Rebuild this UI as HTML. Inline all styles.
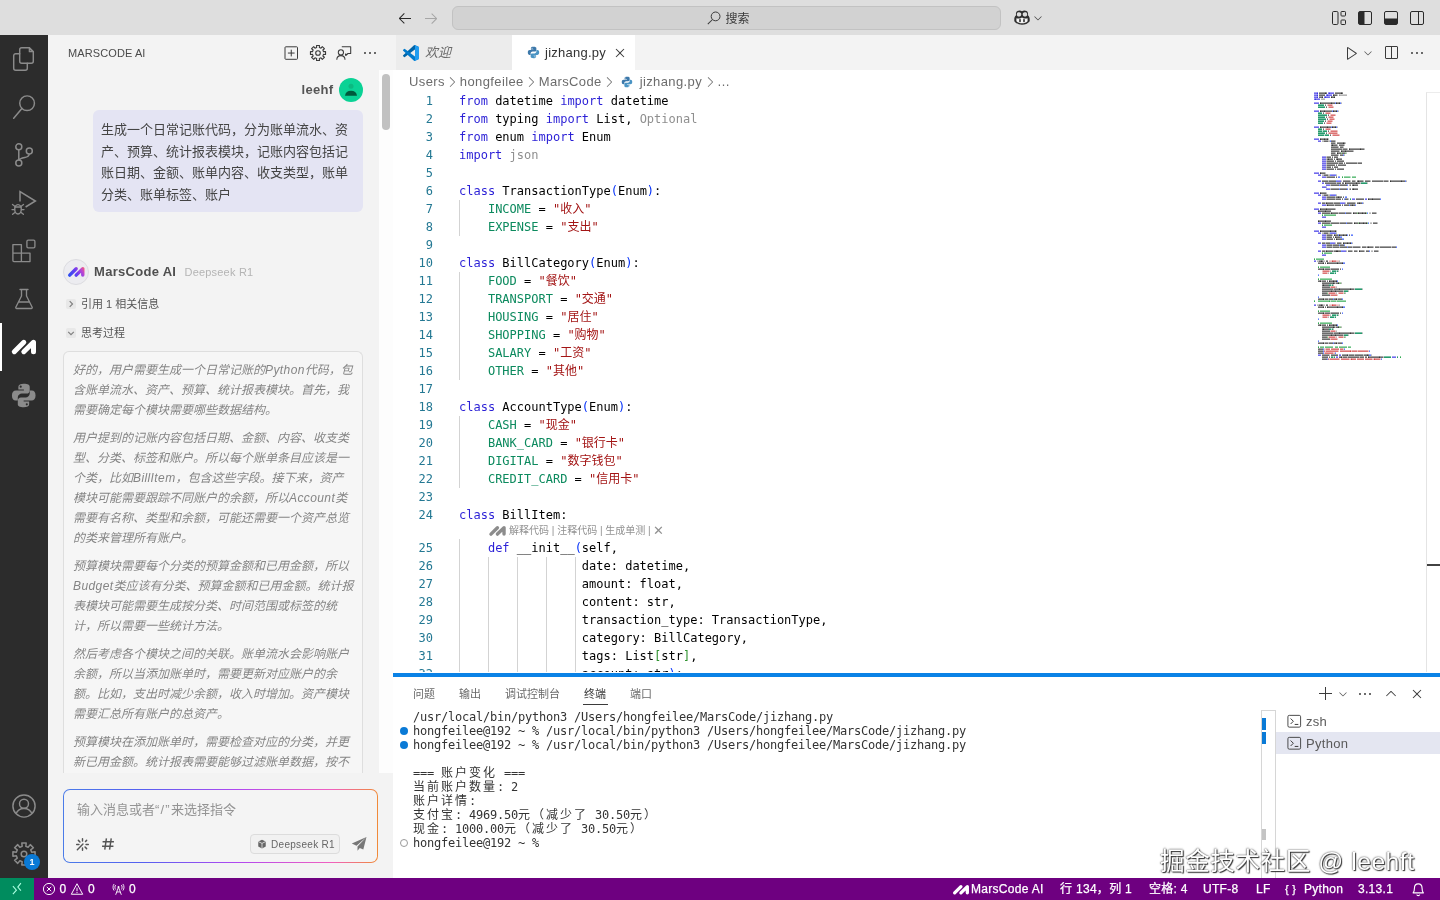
<!DOCTYPE html>
<html lang="zh-CN"><head><meta charset="utf-8"><title>jizhang.py — MarsCode</title>
<style>

*{box-sizing:border-box;margin:0;padding:0}
html,body{width:1440px;height:900px;overflow:hidden;background:#fff}
body{font-family:"Liberation Sans","Noto Sans CJK SC",sans-serif;font-size:13px;color:#3b3b3b;-webkit-font-smoothing:antialiased}
svg{display:block;overflow:visible}
#app{position:relative;width:1440px;height:900px;overflow:hidden;background:#fff;will-change:transform}

/* ---------- title bar ---------- */
#titlebar{position:absolute;left:0;top:0;width:1440px;height:35px;background:#dedede}
#titlebar .nav{position:absolute;top:10px;width:16px;height:16px;color:#2a2a2a}
#titlebar .nav.back{left:397px}
#titlebar .nav.fwd{left:423px;color:#a6a6a6}
#cmdcenter{position:absolute;left:452px;top:6px;width:549px;height:24px;border:1px solid #c2c2c2;border-radius:6px;background:#d2d2d2}
#cmdcenter .sicon{position:absolute;left:252.500px;top:3px;width:16px;height:16px;color:#3b3b3b}
#cmdcenter .stext{position:absolute;left:272.500px;top:.5px;line-height:22px;font-size:12px;color:#3b3b3b}
#copilot{position:absolute;left:1013px;top:9px;width:18px;height:18px;color:#2d2d2d}
#copilot-chev{position:absolute;left:1032px;top:12px;width:12px;height:12px;color:#444}
#titlebar .lay{position:absolute;top:10px;width:16px;height:16px;color:#2a2a2a}
.lay.l1{left:1331px}.lay.l2{left:1357px}.lay.l3{left:1383px}.lay.l4{left:1409px}

/* ---------- activity bar ---------- */
#activity{position:absolute;left:0;top:35px;width:48px;height:843px;background:#2c2c2c}
#activity .act{position:absolute;left:0;width:48px;height:48px;color:#8b8b8b}
#activity .act svg{position:absolute;left:12px;top:12px;width:24px;height:24px}
#activity .act.active{color:#fff}
#activity .act.big svg{left:10px;top:10.500px;width:27.500px;height:27px}
#activity .actbar{position:absolute;left:0;top:288px;width:2px;height:48px;background:#fff}
#activity .badge{position:absolute;left:24px;top:819px;width:16px;height:16px;border-radius:8px;background:#0a7ad6;color:#fff;font-size:9px;font-weight:bold;line-height:16px;text-align:center}

/* ---------- sidebar ---------- */
#sidebar{position:absolute;left:48px;top:35px;width:345px;height:843px;background:#f3f3f3;overflow:hidden}
#sidebar .hdr{position:absolute;left:20px;top:0;height:35px;line-height:37px;font-size:11px;color:#4a4a4a;letter-spacing:.1px}
#sidebar .hact{position:absolute;top:10px;width:16px;height:16px;color:#3b3b3b}
#sidestrip{position:absolute;left:331px;top:35px;width:14px;height:703px;background:#fdfdfd}
#sidethumb{position:absolute;left:334px;top:38.500px;width:8px;height:56px;border-radius:4px;background:#c1c1c1}

.uname{position:absolute;left:253.500px;top:45.500px;font-size:13px;font-weight:bold;color:#555;line-height:18px;letter-spacing:.3px}
.uavatar{position:absolute;left:291px;top:43px;width:24px;height:24px;border-radius:12px;background:#0ad295;overflow:hidden}
.ububble{position:absolute;left:45px;top:75px;width:270px;height:102px;border-radius:6px;background:#e4e4f3;padding:9px 8px 0;font-size:13px;line-height:21.67px;color:#444;white-space:nowrap}
.ailogo{position:absolute;left:15px;top:224px;width:26px;height:26px;border-radius:13px;background:#ececf0;border:1px solid #dcdce0}
.ainame{position:absolute;left:46px;top:228px;font-size:13px;font-weight:bold;color:#4f4f4f;line-height:18px;letter-spacing:.3px}
.aimodel{position:absolute;left:136.500px;top:228px;font-size:11px;color:#b4b4b4;line-height:18px;letter-spacing:.2px}
.fold{position:absolute;left:17px;height:14px;font-size:11px;line-height:14px;color:#555;white-space:nowrap}
.fold .chv{position:absolute;left:1px;top:2px;width:10px;height:10px;border-radius:2px;background:#e8e8e8;color:#808080}
.fold .lbl{position:absolute;left:16px;top:0}
.think{position:absolute;left:15px;top:316px;width:300px;height:441px;border:1px solid #dedede;border-bottom:none;border-radius:6px 6px 0 0;background:#f6f6f6;padding:8px 9px;font-size:12px;line-height:20px;color:#858585;font-style:italic;white-space:nowrap;overflow:hidden}
.think p{margin:0 0 8px 0}
.think .la{letter-spacing:.4px}
.fade{position:absolute;left:0;top:738px;width:345px;height:20px;background:#f3f3f3}
.inputbox{position:absolute;left:15px;top:754px;width:315px;height:74px;border-radius:7px;background:linear-gradient(90deg,#4a7be8 0%,#5560f0 25%,#b048f0 55%,#f060c0 85%,#f08a38 100%);}
.inputbox .inner{position:absolute;left:1.200px;top:1.200px;right:1.200px;bottom:1.200px;border-radius:5.800px;background:#f4f4f4}
.inputbox .ph{position:absolute;left:14px;top:12px;font-size:13px;line-height:18px;color:#949494;white-space:nowrap}
.inputbox .ic{position:absolute;color:#555}
.modelchip{position:absolute;left:187px;top:45px;width:90px;height:20px;border:1px solid #dcdcdc;border-radius:4px;background:#f1f1f1;font-size:10px;line-height:20px;color:#666;white-space:nowrap}
.modelchip svg{position:absolute;left:6px;top:4px;width:10px;height:10px}
.modelchip span{position:absolute;left:20px;top:0;letter-spacing:.3px}

/* ---------- editor ---------- */
#editor{position:absolute;left:393px;top:35px;width:1047px;height:637px;background:#fff;overflow:hidden}
#tabs{position:absolute;left:0;top:0;width:1047px;height:35px;background:#f3f3f3}
.tab{position:absolute;top:0;height:35px;font-size:13px;line-height:35px;white-space:nowrap}
.tab.t1{left:3px;width:116px;background:#ececec;color:#6a6a6a}
.tab.t2{left:119px;width:123px;background:#fff;color:#333}
.tab .ticon{position:absolute;left:7px;top:10px;width:16px;height:16px}
.tab .ticon.py{left:14.500px;top:11px;width:13px;height:13px}
.tab .tlabel{position:absolute;left:29px;top:0}
.tab.t2 .tlabel{left:33px;letter-spacing:.25px}
.tab .tlabel.it{font-style:italic}
.tab .tclose{position:absolute;left:100px;top:10px;width:16px;height:16px;color:#3b3b3b}
.tact{position:absolute;top:10px;width:16px;height:16px;color:#3b3b3b}
.tact.a1{left:951px}.tact.a1c{left:969px;top:12px;width:12px;height:12px;color:#555}.tact.a2{left:990px}.tact.a3{left:1016px}
#crumbs{position:absolute;left:0;top:35px;width:1047px;height:22px;background:#fff;font-size:13px;line-height:24px;letter-spacing:.38px;color:#6c6c6c;white-space:nowrap;padding-left:16px}
#crumbs span{display:inline-block;vertical-align:top}
#crumbs .sep{width:15px;height:22px;color:#777}
#crumbs .sep svg{width:16px;height:16px;margin:4px 0 0 -.5px}
#crumbs .cpy{width:13px;height:22px;margin:0 5.500px 0 4.500px}
#crumbs .cpy svg{width:12px;height:12px;margin-top:6px}
#code{position:absolute;left:0;top:57px;width:1047px;height:580px;font-family:"DejaVu Sans Mono","Noto Sans CJK SC",monospace;font-size:12px;line-height:18px;color:#000}
.ln .tx{white-space:pre}
.ln{position:relative;height:18px}
.ln .no{position:absolute;left:0;top:0;width:40px;text-align:right;color:#237893}
.ln .tx{position:absolute;left:66px;top:0}
.ln .g{position:absolute;top:0;width:1px;height:18px;background:#d3d3d3}
.lens{position:relative;height:15px;font-family:"Liberation Sans","Noto Sans CJK SC",sans-serif;font-size:10px;line-height:15px;color:#919191}
.lens .lt{position:absolute;left:116px;top:-1px;white-space:nowrap}
.lens svg{position:absolute;left:96px;top:1.500px;width:17px;height:9.800px}
.k{color:#2a1fd6}.c{color:#0c8a5e}.s{color:#a31515}.s .z{color:#a31515}.b1{color:#0431fa}.b2{color:#319331}.u{color:#8f8f8f}
#minimap{position:absolute;left:921px;top:57px;width:106px;height:580px}
#ruler{position:absolute;left:1033px;top:57px;width:14px;height:580px;border-left:1px solid #e4e4e4;border-top:1px solid #ececec}
#rulermark{position:absolute;left:1034px;top:528.500px;width:13px;height:2.500px;background:#424242}
#sash{z-index:5;position:absolute;left:393px;top:673px;width:1047px;height:4px;background:#0a82e6}

/* ---------- panel ---------- */
#panel{position:absolute;left:393px;top:676px;width:1047px;height:202px;background:#fff;overflow:hidden}
#panel .ptab{position:absolute;top:9px;font-size:11px;line-height:18px;color:#6a6a6a;white-space:nowrap}
#panel .ptab.on{color:#3b3b3b}
#panel .punder{position:absolute;left:190px;top:28px;width:25px;height:1px;background:#3b3b3b}
#panel .pact{position:absolute;top:10px;width:16px;height:16px;color:#3b3b3b}
#term{position:absolute;left:20px;top:34px;font-family:"DejaVu Sans Mono","Noto Sans CJK SC",monospace;font-size:12px;line-height:14px;color:#333;white-space:pre;letter-spacing:-0.224px}
#term .z{letter-spacing:2px}
#term .zp{letter-spacing:2px}
.tdot{position:absolute;left:7px;width:8px;height:8px;border-radius:4px;background:#0a7ad6}
.tdot.o{background:#fff;border:1px solid #9a9a9a}
#tscroll{position:absolute;left:868px;top:34px;width:15px;height:168px;border-left:1px solid #d6d6d6;border-right:1px solid #d6d6d6;border-top:1px solid #d6d6d6}
.tsm{position:absolute;left:869px;width:4px;background:#0a7ad6}
#tlist .row{position:absolute;left:883px;width:164px;height:22px;font-size:13px;line-height:24px;color:#5a5a5a;letter-spacing:.3px}
#tlist .row.sel{background:#e4e6f1}
#tlist .row svg{position:absolute;left:11px;top:4px;width:14.500px;height:14.500px;color:#3b3b3b}
#tlist .row span{position:absolute;left:30px;top:0}

/* ---------- status bar ---------- */
#status{position:absolute;left:0;top:878px;width:1440px;height:22px;background:#6e0080;color:#fff;font-size:12px;line-height:22px;white-space:nowrap;letter-spacing:.3px;-webkit-text-stroke:.25px #fff}
#status .remote{position:absolute;left:0;top:0;width:34px;height:22px;background:#008c5e}
#status .remote svg{position:absolute;left:9px;top:3px;width:16px;height:16px}
#status .si{position:absolute;top:0}
#status .sv{position:absolute;top:4px;width:14px;height:14px}
#watermark{position:absolute;left:1160px;top:844px;font-size:24.600px;line-height:36px;color:#fff;white-space:nowrap;letter-spacing:.55px;text-shadow:1px 1px 1px rgba(40,40,40,.95),0 0 2px rgba(50,50,50,.85),-.5px -.5px 1px rgba(90,90,90,.45)}

</style></head>
<body>
<div id="app">
<!-- ===== title bar ===== -->
<div id="titlebar">
  <div class="nav back"><svg viewBox="0 0 16 16" ><path fill="currentColor" d="M7 3.093l-5 5V8.8l5 5 .707-.707-4.146-4.147H14v-1H3.56L7.708 3.8 7 3.093z"/></svg></div>
  <div class="nav fwd"><svg viewBox="0 0 16 16" ><path fill="currentColor" d="M9 13.887l5-5V8.18l-5-5-.707.707 4.146 4.147H2v1h10.44L8.292 13.18l.707.707z"/></svg></div>
  <div id="cmdcenter"><span class="sicon"><svg viewBox="0 0 16 16" ><circle cx="9.600" cy="6.400" r="4.400" fill="none" stroke="currentColor" stroke-width="1"/><path d="M6.500 9.500L1.800 14.200" fill="none" stroke="currentColor" stroke-width="1.050"/></svg></span><span class="stext">搜索</span></div>
  <div id="copilot"><svg viewBox="0 0 18 18" ><path fill="currentColor" d="M9 2.2c-1.2-1-3.3-1.1-4.6-.2C3 3 2.700 4.800 3.100 6.300 1.900 7.300 1.300 8.600 1.300 10v2.200c1.800 2.300 4.700 3.600 7.700 3.600s5.900-1.300 7.700-3.600V10c0-1.400-.6-2.700-1.800-3.700.4-1.500.1-3.300-1.300-4.300-1.300-.9-3.400-.8-4.600.2z"/>
<path fill="#dedede" d="M4.600 3.600c.9-.7 2.600-.6 3.300.3.500.7.500 1.900.1 2.700-.5.900-1.700 1.100-2.700.9-.900-.2-1.500-.8-1.500-1.900 0-.8.200-1.500.8-2zM13.400 3.600c-.9-.7-2.600-.6-3.300.3-.5.700-.5 1.900-.1 2.700.5.900 1.700 1.100 2.700.9.900-.2 1.500-.8 1.500-1.900 0-.8-.2-1.500-.8-2z"/>
<path fill="#f4f4f4" d="M3.400 9.300c1.300.4 3.600.5 5.600-.9 2 1.400 4.300 1.300 5.600.9v2.900c-1.500 1.400-3.500 2.100-5.600 2.100s-4.100-.7-5.600-2.100z"/>
<rect x="6.200" y="10" width="1.600" height="3.300" rx=".7" fill="currentColor"/><rect x="10.200" y="10" width="1.600" height="3.300" rx=".7" fill="currentColor"/></svg></div>
  <div id="copilot-chev"><svg viewBox="0 0 16 16" ><path fill="currentColor" d="M7.976 10.072l4.357-4.357.62.618L8.284 11h-.618L3 6.333l.619-.618 4.357 4.357z"/></svg></div>
  <div class="lay l1"><svg viewBox="0 0 16 16" ><rect x="1.500" y="1.500" width="5.500" height="13" rx="1.200" fill="none" stroke="currentColor"/><rect x="10" y="1.500" width="4.500" height="4.500" rx=".8" fill="none" stroke="currentColor"/><rect x="10" y="10" width="4.500" height="4.500" rx=".8" fill="none" stroke="currentColor"/></svg></div>
  <div class="lay l2"><svg viewBox="0 0 16 16" ><rect x="1.5" y="1.5" width="13" height="13" rx="1.5" fill="none" stroke="currentColor"/><path d="M2 2h5.5v12H2z" fill="currentColor"/></svg></div>
  <div class="lay l3"><svg viewBox="0 0 16 16" ><rect x="1.5" y="1.5" width="13" height="13" rx="1.5" fill="none" stroke="currentColor"/><path d="M2 8.500h12V14H2z" fill="currentColor"/></svg></div>
  <div class="lay l4"><svg viewBox="0 0 16 16" ><rect x="1.5" y="1.5" width="13" height="13" rx="1.5" fill="none" stroke="currentColor"/><path d="M9.500 1.500v13" fill="none" stroke="currentColor"/></svg></div>
</div>
<!-- ===== activity bar ===== -->
<div id="activity">
  <div class="act" style="top:0px"><svg viewBox="0 0 24 24" ><path fill="none" stroke="currentColor" stroke-width="1.450" stroke-linejoin="round" d="M9.700 .700h7.600l4 4v9.600a2 2 0 0 1-2 2h-9.600a2 2 0 0 1-2-2v-11.600a2 2 0 0 1 2-2z"/><path fill="currentColor" fill-opacity=".45" stroke="currentColor" stroke-width="1.200" stroke-linejoin="round" d="M17.300 .700v4h4z"/><path fill="none" stroke="currentColor" stroke-width="1.450" stroke-linecap="round" d="M7.700 6.700h-4a2 2 0 0 0-2 2v12.600a2 2 0 0 0 2 2h9.600a2 2 0 0 0 2-2v-5"/></svg></div>
  <div class="act" style="top:48px"><svg viewBox="0 0 24 24" ><circle cx="15.100" cy="8.200" r="7.350" fill="none" stroke="currentColor" stroke-width="1.450"/><path fill="none" stroke="currentColor" stroke-width="1.500" stroke-linecap="round" d="M9.900 13.400L1.700 23.300"/></svg></div>
  <div class="act" style="top:96px"><svg viewBox="0 0 24 24" ><circle cx="6.800" cy="3.800" r="3" fill="none" stroke="currentColor" stroke-width="1.500"/><circle cx="6.800" cy="20" r="3" fill="none" stroke="currentColor" stroke-width="1.500"/><circle cx="17.300" cy="8" r="3" fill="none" stroke="currentColor" stroke-width="1.500"/><path fill="none" stroke="currentColor" stroke-width="1.500" d="M6.800 6.800v10.200M17.300 11c-.3 2.200-2 3-4.500 3.500-2.800.5-5.300 1-6 3"/></svg></div>
  <div class="act" style="top:144px"><svg viewBox="0 0 24 24" ><path fill="none" stroke="currentColor" stroke-width="1.500" stroke-linejoin="miter" d="M8 10.500V.600L23.400 10l-9.800 6"/><ellipse cx="6" cy="18.300" rx="3.300" ry="4.700" fill="none" stroke="currentColor" stroke-width="1.450"/><path fill="none" stroke="currentColor" stroke-width="1.300" stroke-linecap="round" d="M2.900 16h6.200M2.800 15.200L.5 13.500M9.200 15.200l2.300-1.700M2.600 18.600H0M9.400 18.600H12M2.900 21.400L.6 23.300M9.100 21.400l2.300 1.900"/></svg></div>
  <div class="act" style="top:192px"><svg viewBox="0 0 24 24" ><path fill="none" stroke="currentColor" stroke-width="1.35" stroke-linejoin="round" stroke-linecap="round" d="M.900 5.600h8.500v8.500h8.600v8.500H1.900a1 1 0 0 1-1-1zM9.400 14.100v8.500M.900 14.100h8.500"/><rect x="14.900" y="1.100" width="8" height="7.700" rx="1.300" fill="none" stroke="currentColor" stroke-width="1.350"/></svg></div>
  <div class="act" style="top:240px"><svg viewBox="0 0 24 24" ><path fill="none" stroke="currentColor" stroke-width="1.35" stroke-linejoin="round" stroke-linecap="round" d="M8 2.500h8M9.500 2.500v6.500L3.800 20.200a1 1 0 0 0 .9 1.300h14.600a1 1 0 0 0 .9-1.300L14.500 9V2.500M6.500 15h11"/></svg></div>
  <div class="act active" style="top:288px"><svg viewBox="0 0 24 24" ><path d="M2.300 16.700L11.800 7.300" fill="none" stroke="currentColor" stroke-width="5" stroke-linecap="round"/><path d="M11.800 16.700L21.500 7.300V16.700" fill="none" stroke="currentColor" stroke-width="5" stroke-linecap="round" stroke-linejoin="round"/></svg></div>
  <div class="act big" style="top:336px"><svg viewBox="0 0 24 24" ><path fill="currentColor" d="M11.900 1.500c-2.700 0-4.700.8-4.700 2.700v2.500h4.900v.8H5c-2 0-3.500 1.500-3.500 4.500s1.300 4.500 3.300 4.500h1.900v-2.700c0-2 1.700-3.500 3.700-3.500h4.200c1.600 0 2.700-1.200 2.700-2.800V4.200c0-1.600-1.500-2.700-5.400-2.700zM9.300 3.200a.95.950 0 1 1 0 1.900.95.950 0 0 1 0-1.900z"/>
<path fill="currentColor" d="M12.100 22.500c2.700 0 4.700-.8 4.700-2.700v-2.500h-4.900v-.8H19c2 0 3.500-1.500 3.500-4.500S21.200 7.500 19.200 7.500h-1.900v2.700c0 2-1.700 3.500-3.700 3.500H9.400c-1.600 0-2.700 1.200-2.700 2.800v3.300c0 1.600 1.500 2.700 5.400 2.700zM14.700 20.800a.95.950 0 1 1 0-1.900.95.950 0 0 1 0 1.900z"/></svg></div>
  <div class="actbar"></div>
  <div class="act" style="top:747px"><svg viewBox="0 0 24 24" ><circle cx="12" cy="12" r="11.100" fill="none" stroke="currentColor" stroke-width="1.450"/><circle cx="12" cy="9.700" r="4.500" fill="none" stroke="currentColor" stroke-width="1.450"/><path fill="none" stroke="currentColor" stroke-width="1.450" d="M4 19.800c1.400-3.400 4.500-5.200 8-5.200s6.600 1.800 8 5.200"/></svg></div>
  <div class="act" style="top:795px"><svg viewBox="0 0 24 24" ><path fill="none" stroke="currentColor" stroke-width="1.5" stroke-linejoin="round" d="M10.16 4.32L9.80 0.92L14.20 0.92L13.84 4.32L16.13 5.26L18.28 2.60L21.40 5.72L18.74 7.87L19.68 10.16L23.08 9.80L23.08 14.20L19.68 13.84L18.74 16.13L21.40 18.28L18.28 21.40L16.13 18.74L13.84 19.68L14.20 23.08L9.80 23.08L10.16 19.68L7.87 18.74L5.72 21.40L2.60 18.28L5.26 16.13L4.32 13.84L0.92 14.20L0.92 9.80L4.32 10.16L5.26 7.87L2.60 5.72L5.72 2.60L7.87 5.26z"/><circle cx="12" cy="12" r="2.8" fill="none" stroke="currentColor" stroke-width="1.5"/></svg></div>
  <div class="badge">1</div>
</div>
<!-- ===== sidebar ===== -->
<div id="sidebar">
  <div class="hdr">MARSCODE AI</div>
  <div class="hact" style="left:235px"><svg viewBox="0 0 16 16" ><rect x="2" y="1.800" width="12.500" height="12.500" rx=".8" fill="none" stroke="currentColor" stroke-width="1"/><path fill="none" stroke="currentColor" stroke-width="1" d="M8.250 4.700v6.700M4.900 8.050h6.700"/></svg></div>
  <div class="hact" style="left:262px"><svg viewBox="0 0 16 16" ><path fill="none" stroke="currentColor" stroke-width="1.1" stroke-linejoin="round" d="M6.67 2.46L6.50 0.45L9.50 0.45L9.33 2.46L10.98 3.14L12.28 1.60L14.40 3.72L12.86 5.02L13.54 6.67L15.55 6.50L15.55 9.50L13.54 9.33L12.86 10.98L14.40 12.28L12.28 14.40L10.98 12.86L9.33 13.54L9.50 15.55L6.50 15.55L6.67 13.54L5.02 12.86L3.72 14.40L1.60 12.28L3.14 10.98L2.46 9.33L0.45 9.50L0.45 6.50L2.46 6.67L3.14 5.02L1.60 3.72L3.72 1.60L5.02 3.14z"/><circle cx="8" cy="8" r="2.3" fill="none" stroke="currentColor" stroke-width="1.1"/></svg></div>
  <div class="hact" style="left:288px"><svg viewBox="0 0 16 16" ><path fill="none" stroke="currentColor" stroke-width="1.050" stroke-linejoin="round" d="M5.800 1.700h8.900v6.800h-2.700l-2.300 2V8.600"/><circle cx="4.900" cy="7.400" r="2.600" fill="none" stroke="currentColor" stroke-width="1.050"/><path fill="none" stroke="currentColor" stroke-width="1.050" d="M.8 14.800c0-2.700 1.700-4.200 4.100-4.200s4.100 1.500 4.100 4.200"/></svg></div>
  <div class="hact" style="left:314px"><svg viewBox="0 0 16 16" ><path fill="currentColor" d="M4 8a1 1 0 1 1-2 0 1 1 0 0 1 2 0zm5 0a1 1 0 1 1-2 0 1 1 0 0 1 2 0zm5 0a1 1 0 1 1-2 0 1 1 0 0 1 2 0z"/></svg></div>
  <div id="sidestrip"></div><div id="sidethumb"></div>
  <div class="uname">leehf</div>
  <div class="uavatar"><svg viewBox="0 0 24 24" width="24" height="24"><circle cx="12" cy="8.300" r="2.500" fill="#0cb981"/><path fill="#00593c" d="M6 17.800c.4-3.200 2.600-5 6-5s5.600 1.800 6 5z"/></svg></div>
  <div class="ububble">生成一个日常记账代码，分为账单流水、资<br>产、预算、统计报表模块，记账内容包括记<br>账日期、金额、账单内容、收支类型，账单<br>分类、账单标签、账户</div>
  <div class="ailogo"><div style="position:absolute;left:3.800px;top:7.300px;width:16.500px;height:9.800px"><svg viewBox="-0.2 4.8 24.2 14.4" ><defs><linearGradient id="mg" gradientUnits="userSpaceOnUse" x1="0" y1="19" x2="24" y2="5"><stop offset="0" stop-color="#2450f0"/><stop offset=".5" stop-color="#6a3cf2"/><stop offset=".8" stop-color="#c046d0"/><stop offset="1" stop-color="#ff5f5f"/></linearGradient></defs><path d="M2.300 16.700L11.800 7.300" fill="none" stroke="url(#mg)" stroke-width="5" stroke-linecap="round"/><path d="M11.800 16.700L21.500 7.300V16.700" fill="none" stroke="url(#mg)" stroke-width="5" stroke-linecap="round" stroke-linejoin="round"/></svg></div></div>
  <div class="ainame">MarsCode AI</div>
  <div class="aimodel">Deepseek R1</div>
  <div class="fold" style="top:262px"><span class="chv"><svg viewBox="0 0 10 10"><path d="M3.700 2.200L6.500 5 3.700 7.800" fill="none" stroke="currentColor" stroke-width="1.200"/></svg></span><span class="lbl">引用 1 相关信息</span></div>
  <div class="fold" style="top:291px"><span class="chv"><svg viewBox="0 0 10 10"><path d="M2.200 3.800L5 6.600 7.800 3.800" fill="none" stroke="currentColor" stroke-width="1.200"/></svg></span><span class="lbl">思考过程</span></div>
  <div class="think"><p>好的，用户需要生成一个日常记账的<span class="la">Python</span>代码，包<br>含账单流水、资产、预算、统计报表模块。首先，我<br>需要确定每个模块需要哪些数据结构。</p><p>用户提到的记账内容包括日期、金额、内容、收支类<br>型、分类、标签和账户。所以每个账单条目应该是一<br>个类，比如<span class="la">BillItem</span>，包含这些字段。接下来，资产<br>模块可能需要跟踪不同账户的余额，所以<span class="la">Account</span>类<br>需要有名称、类型和余额，可能还需要一个资产总览<br>的类来管理所有账户。</p><p>预算模块需要每个分类的预算金额和已用金额，所以<br><span class="la">Budget</span>类应该有分类、预算金额和已用金额。统计报<br>表模块可能需要生成按分类、时间范围或标签的统<br>计，所以需要一些统计方法。</p><p>然后考虑各个模块之间的关联。账单流水会影响账户<br>余额，所以当添加账单时，需要更新对应账户的余<br>额。比如，支出时减少余额，收入时增加。资产模块<br>需要汇总所有账户的总资产。</p><p>预算模块在添加账单时，需要检查对应的分类，并更<br>新已用金额。统计报表需要能够过滤账单数据，按不</p></div>
  <div class="fade"></div>
  <div class="inputbox"><div class="inner"></div>
    <div class="ph">输入消息或者<span style="letter-spacing:1.200px">“/”</span>来选择指令</div>
    <div class="ic" style="left:12px;top:48px;width:15px;height:15px"><svg viewBox="0 0 16 16" ><path fill="none" stroke="currentColor" stroke-width="1.550" stroke-linecap="round" d="M2.500 13.500l6-6M8 1.800v2.400M8 11.800v2.400M1.800 8h2.400M11.800 8h2.400M3.600 3.600l1.700 1.700M12.400 3.600l-1.200 1.200M12.400 12.400l-1.700-1.700"/></svg></div>
    <div class="ic" style="left:38px;top:48px;width:14px;height:14px"><svg viewBox="0 0 16 16" ><path fill="none" stroke="currentColor" stroke-width="1.650" d="M6.200 1.500L4.300 14.500M11.700 1.500L9.800 14.500M1.800 5.500h13M1.200 10.500h13"/></svg></div>
    <div class="modelchip"><svg viewBox="0 0 16 16" ><path fill="#666" d="M8 1l6 3v8l-6 3-6-3V4z"/><path fill="none" stroke="#f1f1f1" stroke-width="1.200" d="M2 4l6 3 6-3M8 7v8"/></svg><span>Deepseek R1</span></div>
    <div class="ic" style="left:288px;top:47px;width:16px;height:16px"><svg viewBox="0 0 16 16" ><path fill="#777" d="M15.500 1L.8 7.600l4.700 2.200zM15.500 1L6.500 10.600v4.200l2.300-2.900 3.500 1.700z"/></svg></div>
  </div>
</div>
<!-- ===== editor ===== -->
<div id="editor">
  <div id="tabs">
    <div class="tab t1"><span class="ticon"><svg viewBox="0 0 100 100" ><path fill="#0065a9" d="M96.500 10.800L75.900.9a6.200 6.200 0 0 0-7.100 1.200L1.300 63.700a4.200 4.200 0 0 0 0 6.100l5.500 5a4.200 4.200 0 0 0 5.300.2L93.300 13.500c2.700-2.100 6.700-.100 6.700 3.300v-.2a6.200 6.200 0 0 0-3.500-5.800z"/>
<path fill="#007acc" d="M96.500 89.200l-20.600 9.900a6.200 6.200 0 0 1-7.100-1.200L1.300 36.300a4.200 4.200 0 0 1 0-6.100l5.500-5a4.200 4.200 0 0 1 5.300-.2l81.200 61.500c2.700 2.100 6.700.100 6.700-3.300v.2a6.200 6.200 0 0 1-3.500 5.800z"/>
<path fill="#1f9cf0" d="M75.900 99.100a6.200 6.200 0 0 1-7.100-1.200c2.300 2.300 6.200.7 6.200-2.600V4.700c0-3.300-3.900-4.900-6.200-2.600a6.200 6.200 0 0 1 7.100-1.200l20.600 9.900a6.200 6.200 0 0 1 3.500 5.600v67.200a6.200 6.200 0 0 1-3.500 5.600z"/></svg></span><span class="tlabel it">欢迎</span></div>
    <div class="tab t2"><span class="ticon py"><svg viewBox="0 0 24 24" ><path fill="#3c78aa" d="M11.900 1.500c-2.700 0-4.700.8-4.700 2.700v2.500h4.900v.8H5c-2 0-3.500 1.500-3.500 4.500s1.300 4.500 3.300 4.500h1.900v-2.700c0-2 1.700-3.500 3.700-3.500h4.200c1.600 0 2.700-1.200 2.700-2.800V4.200c0-1.600-1.500-2.700-5.400-2.700zM9.300 3.200a.95.950 0 1 1 0 1.900.95.950 0 0 1 0-1.900z"/>
<path fill="#4a94c4" d="M12.100 22.500c2.700 0 4.700-.8 4.700-2.700v-2.500h-4.900v-.8H19c2 0 3.500-1.500 3.500-4.500S21.200 7.500 19.200 7.500h-1.900v2.700c0 2-1.700 3.500-3.700 3.500H9.400c-1.600 0-2.700 1.200-2.700 2.800v3.300c0 1.600 1.500 2.700 5.400 2.700zM14.700 20.800a.95.950 0 1 1 0-1.900.95.950 0 0 1 0 1.900z"/></svg></span><span class="tlabel">jizhang.py</span><span class="tclose"><svg viewBox="0 0 16 16" ><path fill="currentColor" d="M8 8.707l3.646 3.647.708-.707L8.707 8l3.647-3.646-.707-.708L8 7.293 4.354 3.646l-.707.708L7.293 8l-3.646 3.646.707.708L8 8.707z"/></svg></span></div>
    <div class="tact a1"><svg viewBox="0 0 16 16" ><path fill="currentColor" d="M3.78 2L3 2.41v12l.78.42 9-6V8l-9-6zM4 13.48V3.35l7.6 5.07L4 13.48z"/></svg></div>
    <div class="tact a1c"><svg viewBox="0 0 16 16" ><path fill="currentColor" d="M7.976 10.072l4.357-4.357.62.618L8.284 11h-.618L3 6.333l.619-.618 4.357 4.357z"/></svg></div>
    <div class="tact a2"><svg viewBox="0 0 16 16" ><path fill="currentColor" d="M14 1H3L2 2v11l1 1h11l1-1V2l-1-1zM8 13H3V2h5v11zm6 0H9V2h5v11z"/></svg></div>
    <div class="tact a3"><svg viewBox="0 0 16 16" ><path fill="currentColor" d="M4 8a1 1 0 1 1-2 0 1 1 0 0 1 2 0zm5 0a1 1 0 1 1-2 0 1 1 0 0 1 2 0zm5 0a1 1 0 1 1-2 0 1 1 0 0 1 2 0z"/></svg></div>
  </div>
  <div id="crumbs">
    <span class="bc">Users</span><span class="sep"><svg viewBox="0 0 16 16" ><path fill="currentColor" d="M10.072 8.024L5.715 3.667l.618-.62L11 7.716v.618L6.333 13l-.618-.619 4.357-4.357z"/></svg></span><span class="bc">hongfeilee</span><span class="sep"><svg viewBox="0 0 16 16" ><path fill="currentColor" d="M10.072 8.024L5.715 3.667l.618-.62L11 7.716v.618L6.333 13l-.618-.619 4.357-4.357z"/></svg></span><span class="bc">MarsCode</span><span class="sep"><svg viewBox="0 0 16 16" ><path fill="currentColor" d="M10.072 8.024L5.715 3.667l.618-.62L11 7.716v.618L6.333 13l-.618-.619 4.357-4.357z"/></svg></span><span class="cpy"><svg viewBox="0 0 24 24" ><path fill="#3c78aa" d="M11.900 1.500c-2.700 0-4.700.8-4.700 2.700v2.500h4.900v.8H5c-2 0-3.500 1.500-3.500 4.500s1.300 4.500 3.300 4.500h1.900v-2.700c0-2 1.700-3.500 3.700-3.500h4.200c1.600 0 2.700-1.200 2.700-2.800V4.200c0-1.600-1.500-2.700-5.400-2.700zM9.300 3.200a.95.950 0 1 1 0 1.900.95.950 0 0 1 0-1.900z"/>
<path fill="#4a94c4" d="M12.100 22.500c2.700 0 4.700-.8 4.700-2.700v-2.500h-4.900v-.8H19c2 0 3.500-1.500 3.500-4.500S21.200 7.500 19.200 7.500h-1.900v2.700c0 2-1.700 3.500-3.700 3.500H9.400c-1.600 0-2.700 1.200-2.700 2.800v3.300c0 1.600 1.500 2.700 5.400 2.700zM14.700 20.800a.95.950 0 1 1 0-1.900.95.950 0 0 1 0 1.900z"/></svg></span><span class="bc">jizhang.py</span><span class="sep"><svg viewBox="0 0 16 16" ><path fill="currentColor" d="M10.072 8.024L5.715 3.667l.618-.62L11 7.716v.618L6.333 13l-.618-.619 4.357-4.357z"/></svg></span><span class="bc">…</span>
  </div>
  <div id="code">
<div class="ln"><span class="no">1</span><span class="tx"><span class="k">from</span> datetime <span class="k">import</span> datetime</span></div><div class="ln"><span class="no">2</span><span class="tx"><span class="k">from</span> typing <span class="k">import</span> List, <span class="u">Optional</span></span></div><div class="ln"><span class="no">3</span><span class="tx"><span class="k">from</span> enum <span class="k">import</span> Enum</span></div><div class="ln"><span class="no">4</span><span class="tx"><span class="k">import</span> <span class="u">json</span></span></div><div class="ln"><span class="no">5</span><span class="tx"></span></div><div class="ln"><span class="no">6</span><span class="tx"><span class="k">class</span> TransactionType<span class="b1">(</span>Enum<span class="b1">)</span>:</span></div><div class="ln"><span class="no">7</span><i class="g" style="left:66.0px"></i><span class="tx">    <span class="c">INCOME</span> = <span class="s">"收入"</span></span></div><div class="ln"><span class="no">8</span><i class="g" style="left:66.0px"></i><span class="tx">    <span class="c">EXPENSE</span> = <span class="s">"支出"</span></span></div><div class="ln"><span class="no">9</span><span class="tx"></span></div><div class="ln"><span class="no">10</span><span class="tx"><span class="k">class</span> BillCategory<span class="b1">(</span>Enum<span class="b1">)</span>:</span></div><div class="ln"><span class="no">11</span><i class="g" style="left:66.0px"></i><span class="tx">    <span class="c">FOOD</span> = <span class="s">"餐饮"</span></span></div><div class="ln"><span class="no">12</span><i class="g" style="left:66.0px"></i><span class="tx">    <span class="c">TRANSPORT</span> = <span class="s">"交通"</span></span></div><div class="ln"><span class="no">13</span><i class="g" style="left:66.0px"></i><span class="tx">    <span class="c">HOUSING</span> = <span class="s">"居住"</span></span></div><div class="ln"><span class="no">14</span><i class="g" style="left:66.0px"></i><span class="tx">    <span class="c">SHOPPING</span> = <span class="s">"购物"</span></span></div><div class="ln"><span class="no">15</span><i class="g" style="left:66.0px"></i><span class="tx">    <span class="c">SALARY</span> = <span class="s">"工资"</span></span></div><div class="ln"><span class="no">16</span><i class="g" style="left:66.0px"></i><span class="tx">    <span class="c">OTHER</span> = <span class="s">"其他"</span></span></div><div class="ln"><span class="no">17</span><span class="tx"></span></div><div class="ln"><span class="no">18</span><span class="tx"><span class="k">class</span> AccountType<span class="b1">(</span>Enum<span class="b1">)</span>:</span></div><div class="ln"><span class="no">19</span><i class="g" style="left:66.0px"></i><span class="tx">    <span class="c">CASH</span> = <span class="s">"现金"</span></span></div><div class="ln"><span class="no">20</span><i class="g" style="left:66.0px"></i><span class="tx">    <span class="c">BANK_CARD</span> = <span class="s">"银行卡"</span></span></div><div class="ln"><span class="no">21</span><i class="g" style="left:66.0px"></i><span class="tx">    <span class="c">DIGITAL</span> = <span class="s">"数字钱包"</span></span></div><div class="ln"><span class="no">22</span><i class="g" style="left:66.0px"></i><span class="tx">    <span class="c">CREDIT_CARD</span> = <span class="s">"信用卡"</span></span></div><div class="ln"><span class="no">23</span><span class="tx"></span></div><div class="ln"><span class="no">24</span><span class="tx"><span class="k">class</span> BillItem:</span></div><div class="lens"><svg viewBox="-0.2 4.8 24.2 14.4" ><path d="M2.300 16.700L11.800 7.300" fill="none" stroke="#8c8c8c" stroke-width="5" stroke-linecap="round"/><path d="M11.800 16.700L21.500 7.300V16.700" fill="none" stroke="#8c8c8c" stroke-width="5" stroke-linecap="round" stroke-linejoin="round"/></svg><span class="lt">解释代码 | 注释代码 | 生成单测 | <span style="font-size:13px;line-height:0;vertical-align:-1px">✕</span></span></div><div class="ln"><span class="no">25</span><i class="g" style="left:66.0px"></i><span class="tx">    <span class="k">def</span> __init__<span class="b1">(</span>self,</span></div><div class="ln"><span class="no">26</span><i class="g" style="left:66.0px"></i><i class="g" style="left:94.9px"></i><i class="g" style="left:123.8px"></i><i class="g" style="left:152.7px"></i><i class="g" style="left:181.6px"></i><span class="tx">                 date: datetime,</span></div><div class="ln"><span class="no">27</span><i class="g" style="left:66.0px"></i><i class="g" style="left:94.9px"></i><i class="g" style="left:123.8px"></i><i class="g" style="left:152.7px"></i><i class="g" style="left:181.6px"></i><span class="tx">                 amount: float,</span></div><div class="ln"><span class="no">28</span><i class="g" style="left:66.0px"></i><i class="g" style="left:94.9px"></i><i class="g" style="left:123.8px"></i><i class="g" style="left:152.7px"></i><i class="g" style="left:181.6px"></i><span class="tx">                 content: str,</span></div><div class="ln"><span class="no">29</span><i class="g" style="left:66.0px"></i><i class="g" style="left:94.9px"></i><i class="g" style="left:123.8px"></i><i class="g" style="left:152.7px"></i><i class="g" style="left:181.6px"></i><span class="tx">                 transaction_type: TransactionType,</span></div><div class="ln"><span class="no">30</span><i class="g" style="left:66.0px"></i><i class="g" style="left:94.9px"></i><i class="g" style="left:123.8px"></i><i class="g" style="left:152.7px"></i><i class="g" style="left:181.6px"></i><span class="tx">                 category: BillCategory,</span></div><div class="ln"><span class="no">31</span><i class="g" style="left:66.0px"></i><i class="g" style="left:94.9px"></i><i class="g" style="left:123.8px"></i><i class="g" style="left:152.7px"></i><i class="g" style="left:181.6px"></i><span class="tx">                 tags: List<span class="b2">[</span>str<span class="b2">]</span>,</span></div><div class="ln"><span class="no">32</span><i class="g" style="left:66.0px"></i><i class="g" style="left:94.9px"></i><i class="g" style="left:123.8px"></i><i class="g" style="left:152.7px"></i><i class="g" style="left:181.6px"></i><span class="tx">                 account: str<span class="b1">)</span>:</span></div>
  </div>
  <div id="minimap"><svg width="106" height="580" viewBox="0 0 106 580" shape-rendering="crispEdges"><path d="M0 1h3M14 1h1M16 1h4M0 3h3M12 3h1M14 3h4M0 5h3M10 5h1M12 5h4M0 7h1M2 7h4M0 11h5M0 19h5M0 35h5M0 47h5M4 49h3M8 65h4M8 67h4M8 69h4M8 71h4M8 73h4M8 75h4M8 77h4M0 81h5M4 83h3M17 83h4M8 85h4M4 89h3M23 89h4M8 91h2M12 93h4M8 95h4M12 97h4M0 101h5M4 103h3M17 103h4M8 105h4M8 107h4M38 107h3M51 107h2M4 111h3M27 111h4M8 113h4M0 117h5M4 121h3M8 125h4M4 131h3M8 135h4M0 139h5M4 141h3M17 141h4M8 143h4M8 145h4M8 147h4M4 151h3M17 151h4M8 153h4M8 155h4M4 159h3M28 159h4M8 163h4M0 169h2M0 213h2M4 263h3M25 263h2M22 265h2M78 265h4" stroke="#1a10e0" stroke-width="2" opacity="0.62" fill="none"/><path d="M3 1h1M15 1h1M3 3h1M13 3h1M3 5h1M11 5h1M1 7h1" stroke="#1a10e0" stroke-width="2" opacity="0.85" fill="none"/><path d="M5 1h6M12 1h1M21 1h6M28 1h1M5 3h6M20 3h3M5 5h3M18 5h2M7 11h10M18 11h3M23 11h2M11 13h1M12 15h1M7 19h3M11 19h7M20 19h2M9 21h1M14 23h1M12 25h1M13 27h1M11 29h1M10 31h1M7 35h6M14 35h3M19 35h2M9 37h1M14 39h1M12 41h1M16 43h1M7 47h3M11 47h2M10 49h4M17 49h4M17 51h4M23 51h6M30 51h1M17 53h1M19 53h4M25 53h5M17 55h7M26 55h3M17 57h11M29 57h4M36 57h10M47 57h3M17 59h8M28 59h3M32 59h7M17 61h4M24 61h3M28 61h3M17 63h7M26 63h3M13 65h4M18 65h1M20 65h4M13 67h1M15 67h4M20 67h1M22 67h1M24 67h4M13 69h7M21 69h1M23 69h7M13 71h11M25 71h4M30 71h1M32 71h11M44 71h4M13 73h8M22 73h1M24 73h8M13 75h4M18 75h1M20 75h4M13 77h7M21 77h1M23 77h7M7 81h4M10 83h4M13 85h8M22 85h1M8 89h6M15 89h7M29 89h7M38 89h3M43 89h1M45 89h4M51 89h5M58 89h11M70 89h4M77 89h10M88 89h3M11 91h11M23 91h4M28 91h1M29 91h1M32 91h10M43 91h3M17 93h8M26 93h7M36 93h1M38 93h1M40 93h4M17 97h8M26 97h7M36 97h1M38 97h1M40 97h4M7 101h5M10 103h4M13 105h8M22 105h2M25 105h3M29 105h1M13 107h8M22 107h5M28 107h1M31 107h3M42 107h8M55 107h3M59 107h7M8 111h3M13 111h6M20 111h6M33 111h8M43 111h2M46 111h2M14 113h6M21 113h6M28 113h1M30 113h5M36 113h2M39 113h2M7 117h5M13 117h8M5 119h6M12 119h5M8 121h8M18 121h6M25 121h6M32 121h5M40 121h3M45 121h3M49 121h2M58 121h4M5 129h6M12 129h5M8 131h8M17 131h8M26 131h6M33 131h5M41 131h3M46 131h3M50 131h2M59 131h4M7 139h9M17 139h4M10 141h4M13 143h5M21 143h3M26 143h3M30 143h2M35 143h1M13 145h5M19 145h1M22 145h4M13 147h6M20 147h1M23 147h5M8 151h3M12 151h4M23 151h4M30 151h3M34 151h2M13 153h5M19 153h6M26 153h4M13 155h5M19 155h6M26 155h7M34 155h4M39 155h7M48 155h4M53 155h1M55 155h4M61 155h4M66 155h11M78 155h4M8 159h3M13 159h6M20 159h2M24 159h3M34 159h4M40 159h3M46 159h4M52 159h3M60 159h4M5 169h2M8 169h1M12 169h1M13 169h1M4 171h5M11 171h1M14 171h9M24 171h4M4 177h5M11 177h5M17 177h8M26 177h1M4 189h2M8 189h4M13 189h1M16 189h3M20 189h2M8 191h4M12 191h1M13 191h6M20 191h1M22 191h2M8 193h1M10 193h4M14 193h1M8 195h7M15 195h1M8 197h11M20 197h4M24 197h1M26 197h10M37 197h3M8 199h8M16 199h1M18 199h3M22 199h7M8 201h4M12 201h1M8 203h7M15 203h1M4 207h5M11 207h3M15 207h4M20 207h2M24 207h4M5 213h2M8 213h1M12 213h1M13 213h1M4 215h5M11 215h1M14 215h9M24 215h4M4 221h5M11 221h5M17 221h8M26 221h1M4 233h2M8 233h4M13 233h1M16 233h3M20 233h2M8 235h4M12 235h1M13 235h6M20 235h1M22 235h2M8 237h1M10 237h4M14 237h1M8 239h7M15 239h1M8 241h11M20 241h4M24 241h1M26 241h10M37 241h3M8 243h8M16 243h1M18 243h3M22 243h7M8 245h4M12 245h1M8 247h7M15 247h1M4 251h5M11 251h3M15 251h4M20 251h2M24 251h4M4 257h5M4 259h5M4 261h5M8 263h7M17 263h7M28 263h5M35 263h5M41 263h8M50 263h3M54 263h1M8 265h6M15 265h1M25 265h2M29 265h4M34 265h11M46 265h4M51 265h1M52 265h1M55 265h10M66 265h3M8 267h5" stroke="#111" stroke-width="2" opacity="0.62" fill="none"/><path d="M11 1h1M27 1h1M19 3h1M8 5h1M17 5h1M20 5h1M6 11h1M17 11h1M22 11h1M25 11h1M6 19h1M10 19h1M19 19h1M22 19h1M6 35h1M13 35h1M18 35h1M21 35h1M6 47h1M10 47h1M13 47h1M29 51h1M18 53h1M35 57h1M46 57h1M27 59h1M31 59h1M23 61h1M14 67h1M23 67h1M6 81h1M44 89h1M76 89h1M87 89h1M31 91h1M42 91h1M39 93h1M39 97h1M6 101h1M24 105h1M54 107h1M58 107h1M12 111h1M45 111h1M13 113h1M38 113h1M6 117h1M12 117h1M4 119h1M11 119h1M17 121h1M39 121h1M44 121h1M48 121h1M51 121h1M4 129h1M11 129h1M40 131h1M45 131h1M49 131h1M52 131h1M6 139h1M16 139h1M21 139h1M20 143h1M25 143h1M29 143h1M32 143h1M21 145h1M22 147h1M29 151h1M33 151h1M36 151h1M54 155h1M12 159h1M22 159h2M45 159h1M7 169h1M9 171h1M13 171h1M23 171h1M28 171h1M9 177h1M6 189h1M15 189h1M19 189h1M22 189h1M19 191h1M24 191h1M9 193h1M25 197h1M36 197h1M17 199h1M21 199h1M9 207h1M22 207h1M7 213h1M9 215h1M13 215h1M23 215h1M28 215h1M9 221h1M6 233h1M15 233h1M19 233h1M22 233h1M19 235h1M24 235h1M9 237h1M25 241h1M36 241h1M17 243h1M21 243h1M9 251h1M22 251h1M33 263h1M53 263h1M27 265h1M54 265h1M65 265h1" stroke="#111" stroke-width="2" opacity="0.85" fill="none"/><path d="M23 3h1M27 11h1M24 19h1M23 35h1M14 47h1M8 49h2M14 49h2M21 49h1M21 51h1M31 51h1M23 53h1M30 53h1M24 55h1M29 55h1M28 57h1M33 57h1M50 57h1M25 59h1M39 59h1M21 61h1M32 61h1M24 63h1M30 63h1M12 65h1M12 67h1M12 69h1M12 71h1M24 71h1M43 71h1M12 73h1M12 75h1M12 77h1M11 81h1M8 83h2M14 83h2M22 83h1M12 85h1M14 89h1M27 89h1M36 89h1M41 89h1M49 89h1M56 89h1M69 89h1M74 89h1M92 89h1M22 91h1M46 91h1M53 91h1M16 93h1M35 93h1M12 95h1M16 97h1M35 97h1M12 101h1M8 103h2M14 103h2M22 103h1M12 105h1M21 105h1M12 107h1M21 107h1M34 107h1M11 111h1M19 111h1M31 111h1M41 111h1M49 111h1M12 113h1M20 113h1M21 117h1M16 121h1M24 121h1M37 121h1M55 121h1M56 121h1M62 121h1M16 131h1M25 131h1M38 131h1M56 131h1M57 131h1M63 131h1M22 139h1M8 141h2M14 141h2M22 141h1M12 143h1M18 143h1M12 145h1M12 147h1M11 151h1M21 151h1M27 151h1M38 151h1M12 153h1M18 153h1M12 155h1M18 155h1M25 155h1M38 155h1M46 155h1M52 155h1M59 155h1M65 155h1M77 155h1M11 159h1M19 159h1M32 159h1M38 159h1M43 159h1M50 159h1M57 159h1M58 159h1M64 159h1M3 169h2M9 169h2M25 169h1M10 177h1M16 177h1M16 179h1M24 179h1M14 181h1M7 189h1M21 191h1M27 191h1M19 193h1M22 195h1M19 197h1M40 197h1M48 197h1M29 199h1M34 199h1M22 201h1M31 201h1M10 207h1M14 207h1M23 207h1M3 213h2M9 213h2M25 213h1M10 221h1M16 221h1M16 223h1M24 223h1M14 225h1M7 233h1M21 235h1M27 235h1M19 237h1M22 239h1M19 241h1M40 241h1M48 241h1M29 243h1M34 243h1M22 245h1M31 245h1M10 251h1M14 251h1M23 251h1M15 263h1M34 263h1M40 263h1M49 263h1M57 263h1M28 265h1M33 265h1M45 265h1M69 265h1" stroke="#111" stroke-width="2" opacity="0.3" fill="none"/><path d="M25 3h1" stroke="#888" stroke-width="2" opacity="0.85" fill="none"/><path d="M26 3h7M7 7h4" stroke="#888" stroke-width="2" opacity="0.62" fill="none"/><path d="M21 11h1M26 11h1M18 19h1M23 19h1M17 35h1M22 35h1M16 49h1M29 63h1M16 83h1M21 83h1M24 85h1M25 85h1M22 89h1M91 89h1M25 93h1M33 93h1M25 97h1M33 97h1M16 103h1M21 103h1M31 105h1M32 105h1M30 107h1M66 107h1M26 111h1M48 111h1M35 113h1M41 113h1M31 121h1M53 121h1M32 131h1M54 131h1M16 141h1M21 141h1M24 143h1M33 143h1M37 143h1M38 143h1M26 145h1M27 145h1M28 147h1M29 147h1M16 151h1M37 151h1M25 153h1M30 153h1M33 155h1M82 155h1M27 159h1M55 159h1M29 171h1M30 171h1M28 177h1M4 183h1M23 189h1M4 205h1M19 207h1M28 207h1M29 215h1M30 215h1M28 221h1M4 227h1M23 233h1M4 249h1M19 251h1M28 251h1M9 257h1M30 257h1M9 259h1M55 259h1M9 261h1M21 261h1M55 263h1M56 263h1M13 267h1M67 267h1" stroke="#0431fa" stroke-width="2" opacity="0.62" fill="none"/><path d="M4 13h6M4 15h7M4 21h4M4 23h9M4 25h7M4 27h8M4 29h6M4 31h5M4 37h4M4 39h4M9 39h4M4 41h7M4 43h6M11 43h4M47 91h6M36 107h1M18 179h4M23 179h1M16 181h4M21 181h1M15 193h2M18 193h1M41 197h7M30 199h4M18 223h4M23 223h1M16 225h4M21 225h1M15 237h2M18 237h1M41 241h7M30 243h4M17 265h2M20 265h1M70 265h7M83 265h1" stroke="#008a55" stroke-width="2" opacity="0.85" fill="none"/><path d="M13 13h1M18 13h1M14 15h1M19 15h1M11 21h1M16 21h1M16 23h1M21 23h1M14 25h1M19 25h1M15 27h1M20 27h1M13 29h1M18 29h1M12 31h1M17 31h1M11 37h1M16 37h1M16 39h1M23 39h1M14 41h1M23 41h1M18 43h1M25 43h1M15 169h3M22 169h3M8 179h1M15 179h1M8 181h1M13 181h1M16 195h1M21 195h1M14 201h1M21 201h1M24 201h1M29 201h1M16 203h1M23 203h1M15 213h3M22 213h3M8 223h1M15 223h1M8 225h1M13 225h1M16 239h1M21 239h1M14 245h1M21 245h1M24 245h1M29 245h1M16 247h1M23 247h1M10 257h2M29 257h1M11 259h1M24 259h1M37 259h1M43 259h1M54 259h1M10 261h1M19 261h2M15 267h1M25 267h1M35 267h2M58 267h2M66 267h1" stroke="#c81e1e" stroke-width="2" opacity="0.3" fill="none"/><path d="M14 13h4M15 15h4M12 21h4M17 23h4M15 25h4M16 27h4M14 29h4M13 31h4M12 37h4M17 39h6M15 41h8M19 43h6M19 169h3M9 179h6M9 181h4M17 195h4M15 201h6M25 201h4M17 203h6M19 213h3M9 223h6M9 225h4M17 239h4M15 245h6M25 245h4M17 247h6M12 257h4M17 257h8M26 257h3M10 259h1M12 259h12M26 259h10M38 259h5M44 259h10M11 261h8M14 267h1M16 267h9M27 267h8M38 267h4M43 267h7M51 267h7M61 267h5" stroke="#c81e1e" stroke-width="2" opacity="0.62" fill="none"/><path d="M8 39h1M10 43h1M22 179h1M20 181h1M17 193h1M22 223h1M20 225h1M17 237h1M19 265h1" stroke="#008a55" stroke-width="2" opacity="0.3" fill="none"/><path d="M27 61h1M31 61h1M43 121h1M52 121h1M44 131h1M53 131h1M25 191h1M26 191h1M13 201h1M30 201h1M25 235h1M26 235h1M13 245h1M30 245h1" stroke="#319331" stroke-width="2" opacity="0.62" fill="none"/><path d="M28 85h1M8 123h1M8 133h1M8 161h1M0 167h1M4 175h1M4 187h1M0 209h1M15 209h1M4 219h1M4 231h1M4 255h1M86 265h1" stroke="#0a9a30" stroke-width="2" opacity="0.85" fill="none"/><path d="M30 85h6M38 85h4M10 123h12M10 133h8M10 161h8M2 167h8M6 175h10M6 187h12M4 209h11M17 209h5M23 209h9M6 219h10M6 231h12M6 255h4M11 255h8M21 255h3M25 255h8M34 255h3" stroke="#0a9a30" stroke-width="2" opacity="0.62" fill="none"/><path d="M36 85h1M16 209h1M22 209h1" stroke="#0a9a30" stroke-width="2" opacity="0.3" fill="none"/><path d="M18 169h1M18 213h1M36 259h1M37 267h1M60 267h1" stroke="#c81e1e" stroke-width="2" opacity="0.85" fill="none"/><defs><pattern id="mmst" width="4" height="2" patternUnits="userSpaceOnUse"><rect width="4" height="1" fill="#fff" opacity=".38"/></pattern></defs><rect width="106" height="270" fill="url(#mmst)"/></svg></div>
  <div id="ruler"></div><div id="rulermark"></div>
</div>
<div id="sash"></div>
<!-- ===== panel ===== -->
<div id="panel">
  <div class="ptab" style="left:20px">问题</div>
  <div class="ptab" style="left:66px">输出</div>
  <div class="ptab" style="left:112px">调试控制台</div>
  <div class="ptab on" style="left:191px">终端</div>
  <div class="ptab" style="left:237px">端口</div>
  <div class="punder"></div>
  <div class="pact" style="left:925px"><svg viewBox="0 0 16 16" ><path fill="currentColor" d="M14 7v1H8v6H7V8H1V7h6V1h1v6h6z"/></svg></div>
  <div class="pact" style="left:944px;top:12px;width:12px;height:12px;color:#555"><svg viewBox="0 0 16 16" ><path fill="currentColor" d="M7.976 10.072l4.357-4.357.62.618L8.284 11h-.618L3 6.333l.619-.618 4.357 4.357z"/></svg></div>
  <div class="pact" style="left:964px"><svg viewBox="0 0 16 16" ><path fill="currentColor" d="M4 8a1 1 0 1 1-2 0 1 1 0 0 1 2 0zm5 0a1 1 0 1 1-2 0 1 1 0 0 1 2 0zm5 0a1 1 0 1 1-2 0 1 1 0 0 1 2 0z"/></svg></div>
  <div class="pact" style="left:990px"><svg viewBox="0 0 16 16" ><path fill="currentColor" d="M8.024 5.928l-4.357 4.357-.62-.618L7.716 5h.618L13 9.667l-.619.618-4.357-4.357z"/></svg></div>
  <div class="pact" style="left:1016px"><svg viewBox="0 0 16 16" ><path fill="currentColor" d="M8 8.707l3.646 3.647.708-.707L8.707 8l3.647-3.646-.707-.708L8 7.293 4.354 3.646l-.707.708L7.293 8l-3.646 3.646.707.708L8 8.707z"/></svg></div>
  <div id="term">/usr/local/bin/python3 /Users/hongfeilee/MarsCode/jizhang.py
hongfeilee@192 ~ % /usr/local/bin/python3 /Users/hongfeilee/MarsCode/jizhang.py
hongfeilee@192 ~ % /usr/local/bin/python3 /Users/hongfeilee/MarsCode/jizhang.py

=== <span class="z">账户变化</span> ===
<span class="z">当前账户数量</span>: 2
<span class="z">账户详情</span>:
<span class="z">支付宝</span>: 4969.50<span class="z">元（减少了</span> 30.50<span class="z">元）</span>
<span class="z">现金</span>: 1000.00<span class="z">元（减少了</span> 30.50<span class="z">元）</span>
hongfeilee@192 ~ % </div>
  <div class="tdot" style="top:51px"></div><div class="tdot" style="top:65px"></div><div class="tdot o" style="top:163px"></div>
  <div id="tscroll"></div>
  <div class="tsm" style="top:42px;height:12px"></div><div class="tsm" style="top:56px;height:12px"></div>
  <div class="tsm" style="top:153px;height:11px;background:#c4c4c4"></div>
  <div id="tlist">
    <div class="row" style="top:34px"><svg viewBox="0 0 16 16" ><rect x="1" y="1.500" width="14" height="13" rx="1.500" fill="none" stroke="currentColor" stroke-width="1"/><path fill="none" stroke="currentColor" stroke-width="1.100" d="M4 5l3 3-3 3M8.500 11.500h4"/></svg><span>zsh</span></div>
    <div class="row sel" style="top:56px"><svg viewBox="0 0 16 16" ><rect x="1" y="1.500" width="14" height="13" rx="1.500" fill="none" stroke="currentColor" stroke-width="1"/><path fill="none" stroke="currentColor" stroke-width="1.100" d="M4 5l3 3-3 3M8.500 11.500h4"/></svg><span>Python</span></div>
  </div>
</div>
<!-- ===== status bar ===== -->
<div id="status">
  <div class="remote"><svg viewBox="0 0 16 16" ><path fill="none" stroke="#a8ffe0" stroke-width="1.100" d="M3.900 5.200l3.500 4-3.500 4M11.900 2.100l-3.100 4 3.100 3.600"/></svg></div>
  <div class="sv" style="left:42px"><svg viewBox="0 0 16 16" ><circle cx="8" cy="8" r="6.400" fill="none" stroke="#fff" stroke-width="1.100"/><path fill="none" stroke="#fff" stroke-width="1.100" d="M5.500 5.500l5 5M10.500 5.500l-5 5"/></svg></div><div class="si" style="left:59.500px">0</div>
  <div class="sv" style="left:70px"><svg viewBox="0 0 16 16" ><path fill="none" stroke="#fff" stroke-width="1.100" stroke-linejoin="round" d="M8 2L14.500 14h-13z"/><path fill="none" stroke="#fff" stroke-width="1.100" d="M8 6.500v4M8 11.500v1.200"/></svg></div><div class="si" style="left:88px">0</div>
  <div class="sv" style="left:112px;width:13px;height:13px;top:5px"><svg viewBox="0 0 16 16" ><path fill="none" stroke="#fff" stroke-width="1.100" d="M8 5l-3.500 9.500M8 5l3.500 9.500M5.800 11h4.400M4.500 2.500c-1.200 1.400-1.200 4.100 0 5.500M11.500 2.500c1.200 1.400 1.200 4.100 0 5.500M2.600 1.200c-1.800 2.300-1.800 5.800 0 8.100M13.400 1.200c1.800 2.300 1.800 5.800 0 8.100"/><circle cx="8" cy="5" r="1.200" fill="#fff"/></svg></div><div class="si" style="left:129px">0</div>
  <div class="sv" style="left:953px;top:6.500px;width:16px;height:9.200px"><svg viewBox="-0.2 4.8 24.2 14.4" ><path d="M2.300 16.700L11.800 7.300" fill="none" stroke="#fff" stroke-width="5" stroke-linecap="round"/><path d="M11.800 16.700L21.500 7.300V16.700" fill="none" stroke="#fff" stroke-width="5" stroke-linecap="round" stroke-linejoin="round"/></svg></div>
  <div class="si" style="left:971px">MarsCode AI</div>
  <div class="si" style="left:1060px">行 134，列 1</div>
  <div class="si" style="left:1149px">空格: 4</div>
  <div class="si" style="left:1203px">UTF-8</div>
  <div class="si" style="left:1256px">LF</div>
  <div class="si" style="left:1285px;font-size:11px">{ }</div>
  <div class="si" style="left:1304px">Python</div>
  <div class="si" style="left:1358px">3.13.1</div>
  <div class="sv" style="left:1410px;top:3px;width:16.500px;height:16.500px"><svg viewBox="0 0 16 16" ><path fill="none" stroke="#fff" stroke-width="1.100" stroke-linejoin="round" d="M3 11.500c1-1 1.300-2.200 1.300-4.500 0-2.400 1.500-4.200 3.700-4.200s3.700 1.800 3.700 4.200c0 2.300.3 3.500 1.300 4.500z"/><path fill="none" stroke="#fff" stroke-width="1.100" d="M6.500 13.200c.3.700.8 1 1.500 1s1.200-.3 1.500-1"/></svg></div>
</div>
<div id="watermark">掘金技术社区 @ leehft</div>
</div>
</body></html>
